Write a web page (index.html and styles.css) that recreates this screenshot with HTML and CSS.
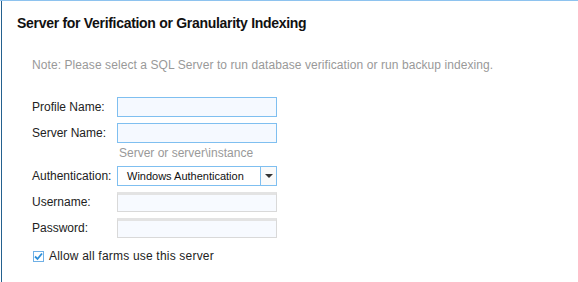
FILE: index.html
```html
<!DOCTYPE html>
<html lang="en">
<head>
    <meta charset="UTF-8">
    <title>Server for Verification or Granularity Indexing</title>
    <link rel="stylesheet" href="styles.css">
</head>
<body>
    <div class="frame">
        <div class="panel">
            <h1 class="title">Server for Verification or Granularity Indexing</h1>

            <p class="note">Note: Please select a SQL Server to run database verification or run backup indexing.</p>

            <div class="form">
                <div class="row">
                    <label class="label">Profile Name:</label>
                    <input type="text" class="field">
                </div>
                <div class="row">
                    <label class="label">Server Name:</label>
                    <input type="text" class="field">
                </div>
                <div class="hint">Server or server\instance</div>
                <div class="row">
                    <label class="label">Authentication:</label>
                    <div class="select">
                        <span class="select-text">Windows Authentication</span>
                        <span class="select-btn"><span class="arrow"></span></span>
                    </div>
                </div>
                <div class="row">
                    <label class="label">Username:</label>
                    <input type="text" class="field disabled" disabled>
                </div>
                <div class="row">
                    <label class="label">Password:</label>
                    <input type="password" class="field disabled" disabled>
                </div>
                <div class="check-row">
                    <span class="checkbox">
                        <svg width="9" height="9" viewBox="0 0 9 9">
                            <path d="M1 4.5 L3.5 7 L8 1.5" fill="none" stroke="#2f8fd8" stroke-width="1.8"/>
                        </svg>
                    </span>
                    <span class="check-label">Allow all farms use this server</span>
                </div>
            </div>
        </div>
    </div>
</body>
</html>
```

FILE: styles.css
```css
* {
    margin: 0;
    padding: 0;
    box-sizing: border-box;
}

body {
    background: white;
    font-family: 'Liberation Sans', Arial, sans-serif;
    font-size: 12px;
    color: #222;
}

.frame {
    height: 282px;
    border-top: 1px solid #8ec3ef;
    padding-left: 1px;
}

.panel {
    height: 100%;
    border-left: 1px solid #24618f;
    padding: 13px 0 0 15px;
}

.title {
    font-size: 14px;
    font-weight: bold;
    letter-spacing: -0.3px;
    color: #111;
    line-height: 18px;
}

.note {
    color: #999;
    line-height: 14px;
    letter-spacing: 0.08px;
    margin: 26px 0 0 15px;
}

.form {
    margin: 25px 0 0 15px;
}

.row {
    display: flex;
    align-items: center;
    height: 20px;
    margin-bottom: 6px;
}

.label {
    width: 85px;
}

.field {
    width: 160px;
    height: 20px;
    border: 1px solid #7fbff0;
    background: #f5f9ff;
    outline: none;
}

.field.disabled {
    border: 1px solid #d9d9d9;
    border-top: 3px solid #e3e3e3;
    background: #f7faff;
}

.hint {
    color: #999;
    margin: -3px 0 0 87px;
    height: 20px;
    line-height: 14px;
}

.select {
    width: 160px;
    height: 20px;
    display: flex;
    border: 1px solid #7fbff0;
    background: white;
}

.select-text {
    flex: 1;
    padding-left: 9px;
    font-size: 11px;
    line-height: 18px;
    color: #111;
}

.select-btn {
    width: 16px;
    border-left: 1px solid #7fbff0;
    display: flex;
    align-items: center;
    justify-content: center;
    background: #fafafa;
}

.arrow {
    width: 0;
    height: 0;
    border-left: 4px solid transparent;
    border-right: 4px solid transparent;
    border-top: 4px solid #333;
}

.check-row {
    display: flex;
    align-items: center;
    gap: 5px;
    margin-top: 11px;
    padding-left: 1px;
}

.check-label {
    letter-spacing: 0.2px;
}

.checkbox {
    width: 11px;
    height: 11px;
    border: 1px solid #6fb0e6;
    background: white;
    display: flex;
    align-items: center;
    justify-content: center;
}
```
